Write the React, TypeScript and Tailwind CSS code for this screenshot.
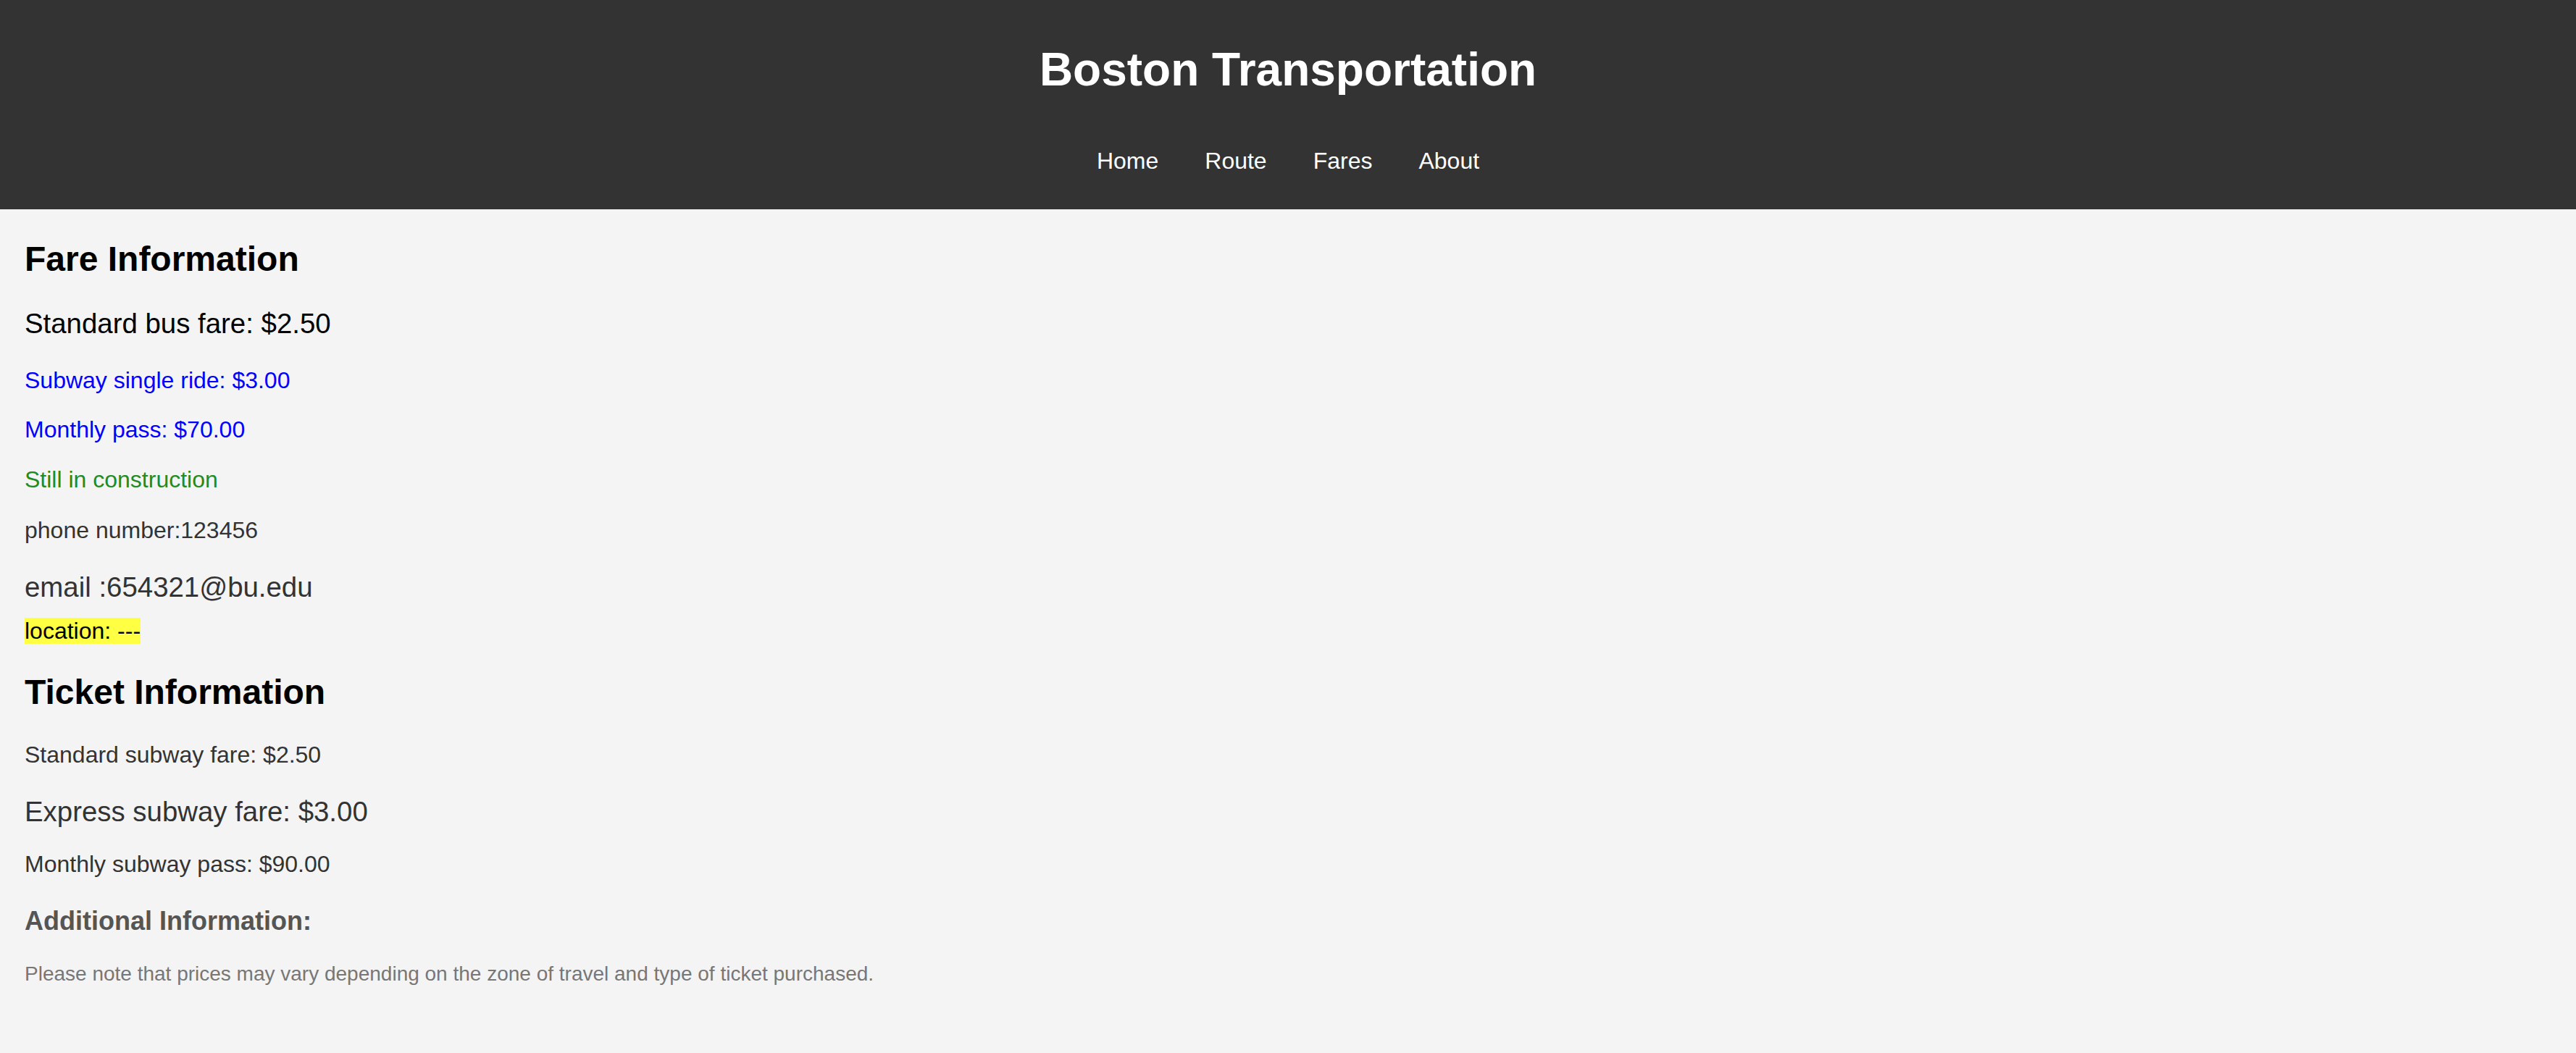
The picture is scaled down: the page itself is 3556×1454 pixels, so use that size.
import React from "react";

export default function App() {
  const links = ["Home", "Route", "Fares", "About"];
  return (
    <div className="min-h-screen bg-[#f4f4f4] font-['Liberation_Sans',Arial,sans-serif]">
      <header className="bg-[#333333] h-[289px] pt-[59px] text-white text-center">
        <h1 className="text-[64px] leading-[74px] font-bold">Boston Transportation</h1>
        <nav className="mt-[71px] flex justify-center">
          {links.map((l) => (
            <a key={l} href="#" className="mx-[32px] text-[32px] leading-[37px] text-white">
              {l}
            </a>
          ))}
        </nav>
      </header>
      <main className="px-[34px]">
        <h2 className="mt-[41px] text-[48px] leading-[55px] font-bold text-black">Fare Information</h2>
        <p className="mt-[40px] text-[38.4px] leading-[44px] text-black">Standard bus fare: $2.50</p>
        <p className="mt-[38px] text-[32px] leading-[37px] text-[#0000ff]">Subway single ride: $3.00</p>
        <p className="mt-[31px] text-[32px] leading-[37px] text-[#0000ff]">Monthly pass: $70.00</p>
        <p className="mt-[32px] text-[32px] leading-[37px] text-[#228b22]">Still in construction</p>
        <p className="mt-[33px] text-[32px] leading-[37px] text-[#333333]">phone number:123456</p>
        <p className="mt-[38px] text-[38.4px] leading-[44px] text-[#333333]">email :654321@bu.edu</p>
        <div className="mt-[20px] text-[32px] leading-[37px] text-black">
          <span className="bg-[#ffff44]">location: ---</span>
        </div>
        <h2 className="mt-[38px] text-[48px] leading-[55px] font-bold text-black">Ticket Information</h2>
        <p className="mt-[41px] text-[32px] leading-[37px] text-[#333333]">Standard subway fare: $2.50</p>
        <p className="mt-[38px] text-[38.4px] leading-[44px] text-[#333333]">Express subway fare: $3.00</p>
        <p className="mt-[32px] text-[32px] leading-[37px] text-[#333333]">Monthly subway pass: $90.00</p>
        <h3 className="mt-[39px] text-[36px] leading-[41px] font-bold text-[#555555]">Additional Information:</h3>
        <p className="mt-[37px] text-[28px] leading-[32px] text-[#777777]">
          Please note that prices may vary depending on the zone of travel and type of ticket purchased.
        </p>
      </main>
    </div>
  );
}
